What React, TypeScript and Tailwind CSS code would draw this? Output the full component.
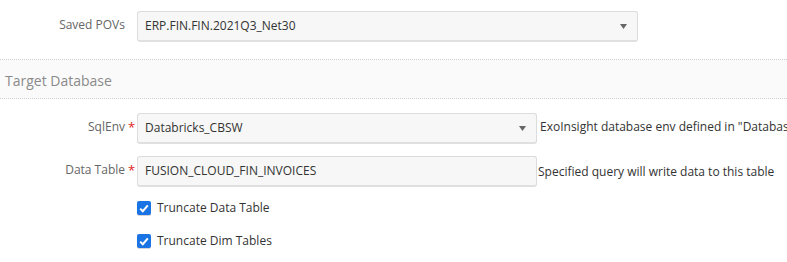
import React from 'react';

const Caret = () => (
  <svg width="7" height="5" viewBox="0 0 7 5" className="shrink-0">
    <path d="M0 0h7L3.5 5z" fill="#666" />
  </svg>
);

const Check = () => (
  <span className="flex h-[14px] w-[14px] shrink-0 items-center justify-center rounded-[2px] bg-[#1b74e4] shadow-[0_1px_0_#d6d6d6]">
    <svg width="10" height="9" viewBox="0 0 10 9">
      <path d="M1.2 4.6 3.8 7.2 8.8 1.4" fill="none" stroke="#fff" strokeWidth="2" />
    </svg>
  </span>
);

const Label: React.FC<{ text: string; required?: boolean }> = ({ text, required }) => (
  <div className="w-[125px] shrink-0 pt-[5px] text-right text-[#666]">
    <span className="relative">
      {text}
      {required && <span className="absolute left-[calc(100%+3px)] top-0 text-[13px] text-[#e02020]">*</span>}
    </span>
  </div>
);

const boxCls =
  'ml-[12px] flex h-[31px] shrink-0 items-center rounded-[3px] border border-[#dcdcdc] border-b-2 border-b-[#e0e0e0] bg-[#f6f7f6] pl-[7px] pr-[10px] text-[#333]';

export default function App() {
  return (
    <div className="w-full overflow-hidden bg-white font-['Open_Sans',sans-serif] text-[12px] leading-[18px]">
      <div className="flex pt-[11px]">
        <Label text="Saved POVs" />
        <div className={`${boxCls} w-[501px] justify-between`}>
          <span>ERP.FIN.FIN.2021Q3_Net30</span>
          <Caret />
        </div>
      </div>

      <div className="mt-[17px] flex h-[40px] items-end border-y border-dotted border-[#cfcfcf] bg-[#fafafa] px-[5px] pb-[7px] text-[14px] leading-[20px] text-[#8a8a8a]">
        Target Database
      </div>

      <div className="mt-[14px] flex items-start">
        <Label text="SqlEnv" required />
        <div className={`${boxCls} w-[400px] justify-between`}>
          <span>Databricks_CBSW</span>
          <Caret />
        </div>
        <span className="ml-[3px] whitespace-nowrap pt-[5px] text-[#333]">
          ExoInsight database env defined in "Database Env" settings
        </span>
      </div>

      <div className="mt-[12px] flex items-start">
        <Label text="Data Table" required />
        <div className={`${boxCls} w-[400px]`}>
          <span>FUSION_CLOUD_FIN_INVOICES</span>
        </div>
        <span className="ml-[1px] whitespace-nowrap pt-[7px] text-[#333]">
          Specified query will write data to this table
        </span>
      </div>

      <div className="ml-[137px] mt-[12px] flex flex-col gap-[15px] pb-[14px] text-[#333]">
        <label className="flex items-center gap-[6px]">
          <Check />
          <span>Truncate Data Table</span>
        </label>
        <label className="flex items-center gap-[6px]">
          <Check />
          <span>Truncate Dim Tables</span>
        </label>
      </div>
    </div>
  );
}
